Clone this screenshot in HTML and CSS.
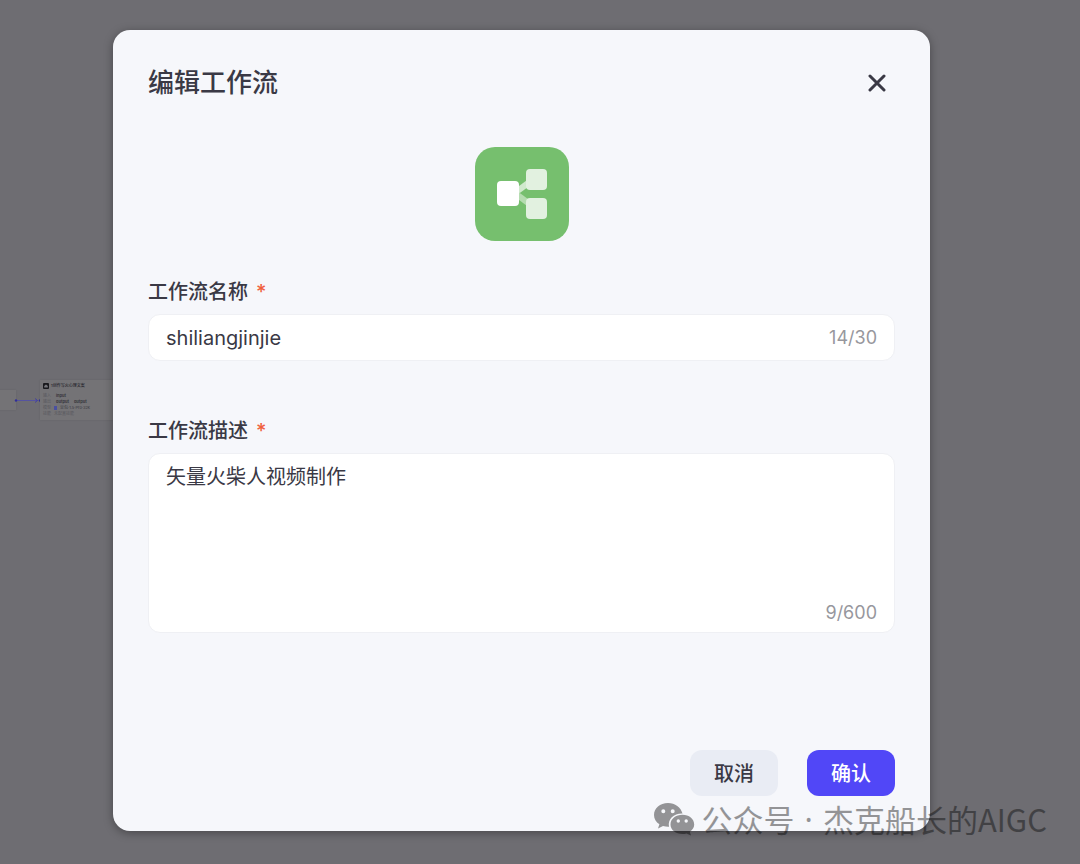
FILE: index.html
```html
<!DOCTYPE html>
<html lang="zh-CN">
<head>
  <meta charset="UTF-8" />
  <meta name="viewport" content="width=device-width, initial-scale=1.0"/>
  <title>编辑工作流</title>
  <link rel="stylesheet" href="styles.css">
</head>
<body>
  <div class="canvas">
    <div class="node node-prev"></div>
    <svg class="edge" width="28" height="6" viewBox="0 0 28 6">
      <path d="M2 3.5h22" stroke="#5553a0" stroke-width="1"/>
      <circle cx="2" cy="3.5" r="1.2" fill="#302e98"/>
      <path d="M21 1.5l2.500 2-2.500 2" fill="none" stroke="#4240a0"/>
      <circle cx="26" cy="3.5" r="1.2" fill="#302e98"/>
    </svg>
    <div class="node node-llm">
      <div class="node-title">
        <svg width="6" height="6" viewBox="0 0 6 6"><rect width="6" height="6" rx="1" fill="#19191d"/><path d="M3 1.4L4.800 3v1.400H1.200V3z" fill="#77777c"/></svg>
        <span>1创作写火心理文案</span>
      </div>
      <div class="node-row"><span>输入</span><b>input</b></div>
      <div class="node-row"><span>输出</span><b>output</b><b>output</b></div>
      <div class="node-row"><span>模型</span><i></i><em>豆包·1.5·Pro·32k</em></div>
      <div class="node-row"><span>技能</span><span>未配置技能</span></div>
    </div>
  </div>

  <div class="overlay">
    <form class="modal" role="dialog" aria-labelledby="modal-title">
      <header class="modal-header">
        <h1 id="modal-title">编辑工作流</h1>
        <button class="close-btn" type="button" aria-label="关闭">
          <svg width="18" height="18" viewBox="0 0 18 18"><path d="M2 2l14 14M16 2L2 16" stroke="#3a3945" stroke-width="3" stroke-linecap="round"/></svg>
        </button>
      </header>

      <div class="workflow-icon">
        <svg width="94" height="94" viewBox="0 0 94 94">
          <path d="M41 45L56 34" stroke="#d0e9cd" stroke-width="6"/>
          <path d="M41 47L56 58" stroke="#b5dcb0" stroke-width="6"/>
          <rect x="51" y="22" width="21" height="21" rx="4" fill="#e2f1e0"/>
          <rect x="51" y="51" width="21" height="21" rx="4" fill="#e2f1e0"/>
          <rect x="22" y="34" width="22" height="25" rx="4" fill="#fff"/>
        </svg>
      </div>

      <div class="field">
        <label for="name">工作流名称<span class="required">*</span></label>
        <div class="input-box">
          <input id="name" type="text" value="shiliangjinjie" maxlength="30">
          <span class="count">14/30</span>
        </div>
      </div>

      <div class="field">
        <label for="desc">工作流描述<span class="required">*</span></label>
        <div class="input-box textarea-box">
          <textarea id="desc" maxlength="600">矢量火柴人视频制作</textarea>
          <span class="count">9/600</span>
        </div>
      </div>

      <footer class="modal-footer">
        <button class="btn btn-cancel" type="button">取消</button>
        <button class="btn btn-confirm" type="submit">确认</button>
      </footer>
    </form>
  </div>

  <div class="watermark">
    <svg width="42" height="34" viewBox="0 0 42 34">
      <path fill-rule="evenodd" d="M15 1C7 1 1 6.200 1 13c0 4 2 7 5.400 9.300L5 26.500l5-2.500c2 .6 4 .9 6 .8C14.500 17 21 11.300 29.500 11.600 28 5.500 22 1 15 1zM10.300 7.200a2 2 0 1 1 0 4 2 2 0 0 1 0-4zM19.700 7.200a2 2 0 1 1 0 4 2 2 0 0 1 0-4z"/>
      <path fill-rule="evenodd" d="M29.500 12.800C22.800 12.800 17.500 17 17.500 22.500S22.800 32 29.500 32c1.500 0 2.800-.2 4-.6l4.500 2.200-1.200-3.800c2.700-1.800 4.400-4.300 4.400-7.300 0-5.500-5.200-9.700-11.700-9.700zM25.300 17.300a1.700 1.700 0 1 1 0 3.400 1.700 1.700 0 0 1 0-3.400zM33.200 17.300a1.700 1.700 0 1 1 0 3.400 1.700 1.700 0 0 1 0-3.400z"/>
    </svg>
    <div class="watermark-text">
      <span>公众号</span>
      <span class="dot">·</span>
      <span>杰克船长的AIGC</span>
    </div>
  </div>
</body>
</html>
```

FILE: styles.css
```css
* {
  box-sizing: border-box;
}

body {
  margin: 0;
  min-height: 100vh;
  background-color: #6e6d72;
  color: #3a3945;
  font-family: Inter, "Noto Sans CJK SC", sans-serif;
  position: relative;
  overflow-x: hidden;
}

button, input, textarea {
  font-family: inherit;
  color: inherit;
  border: none;
  outline: none;
}

/* workflow canvas behind the dialog */
.canvas {
  position: absolute;
  inset: 0;
  overflow: hidden;
}

.node {
  position: absolute;
  background-color: #747376;
  box-shadow: 0 0 2px rgba(0, 0, 0, 0.1);
}

.node-prev {
  left: -20px;
  top: 390px;
  width: 36px;
  height: 20px;
}

.node-llm {
  left: 40px;
  top: 380px;
  width: 90px;
  height: 40px;
  padding: 3px;
  font-size: 4px;
  line-height: 6px;
  color: #58585e;
}

.edge {
  position: absolute;
  left: 14px;
  top: 397px;
}

.node-title {
  display: flex;
  align-items: center;
  gap: 2px;
  margin-bottom: 4px;
  color: #26262c;
  font-weight: 500;
}

.node-row {
  display: flex;
  align-items: center;
  gap: 3px;
}

.node-row b {
  padding-left: 2px;
  color: #36363c;
  font-weight: 700;
}

.node-row i {
  width: 3px;
  height: 4px;
  background-color: #4a50a0;
}

.node-row em {
  color: #3c3c42;
  font-style: normal;
}

/* dialog */
.overlay {
  position: relative;
  padding: 30px 150px 30px 113px;
}

.modal {
  padding: 36px 35px 35px;
  background-color: #f6f7fb;
  border-radius: 17px;
  box-shadow: 0 2px 10px rgba(0, 0, 0, 0.35);
}

.modal-header {
  display: flex;
  align-items: center;
  justify-content: space-between;
  height: 34px;
}

.modal-header h1 {
  margin: 0;
  font-size: 26px;
  line-height: 36px;
  font-weight: 500;
}

.close-btn {
  display: flex;
  padding: 8px 9px;
  background: none;
  cursor: pointer;
}

.workflow-icon {
  display: flex;
  width: 94px;
  margin: 47px auto 36px;
  background-color: #76bf6e;
  border-radius: 20px;
}

.field {
  margin-bottom: 55px;
}

.field label {
  display: flex;
  gap: 8px;
  margin-bottom: 7px;
  font-size: 20px;
  line-height: 30px;
  font-weight: 500;
}

.required {
  color: #f0603c;
}

.input-box {
  display: flex;
  align-items: center;
  height: 47px;
  padding: 0 17px;
  background-color: #fff;
  border: 1px solid #eff0f4;
  border-radius: 12px;
}

.input-box input,
.input-box textarea {
  flex: 1;
  min-width: 0;
  padding: 0;
  background: none;
  font-size: 20px;
  line-height: 30px;
}

.count {
  color: #97979d;
  font-size: 18px;
  line-height: 24px;
}

.textarea-box {
  flex-direction: column;
  align-items: stretch;
  height: 180px;
  padding: 8px 17px 7px;
}

.input-box textarea {
  resize: none;
}

.textarea-box .count {
  text-align: right;
}

.modal-footer {
  display: flex;
  justify-content: flex-end;
  gap: 29px;
  margin-top: 117px;
}

.btn {
  width: 88px;
  height: 46px;
  padding: 0 0 2px;
  border-radius: 12px;
  font-size: 20px;
  font-weight: 500;
  cursor: pointer;
}

.btn-cancel {
  background-color: #e9ecf4;
}

.btn-confirm {
  background-color: #5147f7;
  color: #fff;
}

.watermark {
  position: absolute;
  right: 33px;
  bottom: 23px;
  display: flex;
  align-items: center;
  gap: 7px;
  color: #000;
  font-family: "Noto Sans CJK SC", sans-serif;
  font-size: 31px;
  line-height: 44px;
  opacity: 0.4;
}

.watermark-text {
  display: flex;
  gap: 10px;
}

.watermark .dot {
  font-family: "Noto Sans", sans-serif;
}
```
